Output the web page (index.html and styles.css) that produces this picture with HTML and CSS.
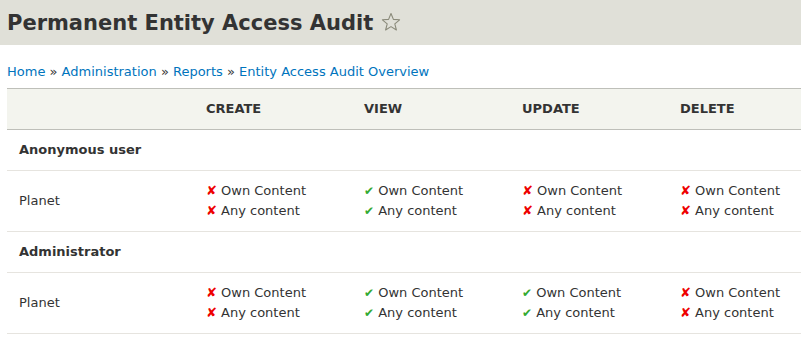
FILE: index.html
```html
<!DOCTYPE html>
<html lang="en">
<head>
    <meta charset="UTF-8">
    <title>Permanent Entity Access Audit</title>
    <link rel="stylesheet" href="styles.css">
</head>
<body>

<header class="page-header">
    <h1>Permanent Entity Access Audit
        <svg class="star" width="20" height="20" viewBox="0 0 20 20">
            <polygon points="10,1.5 12.4,7.4 18.6,7.8 13.8,11.8 15.4,18 10,14.6 4.6,18 6.2,11.8 1.4,7.8 7.6,7.4" fill="none" stroke="#8a8a7a" stroke-width="1.1" stroke-linejoin="round"/>
        </svg>
    </h1>
</header>

<main>
    <nav class="breadcrumb">
        <a href="#">Home</a> » <a href="#">Administration</a> » <a href="#">Reports</a> » <a href="#">Entity Access Audit Overview</a>
    </nav>

    <table class="audit">
        <colgroup>
            <col class="col-first">
            <col class="col-op">
            <col class="col-op">
            <col class="col-op">
            <col class="col-op">
        </colgroup>
        <thead>
            <tr>
                <th></th>
                <th>Create</th>
                <th>View</th>
                <th>Update</th>
                <th>Delete</th>
            </tr>
        </thead>
        <tbody>
            <tr class="role">
                <td colspan="5">Anonymous user</td>
            </tr>
            <tr>
                <td>Planet</td>
                <td><span class="no">✘</span> Own Content<br><span class="no">✘</span> Any content</td>
                <td><span class="yes">✔</span> Own Content<br><span class="yes">✔</span> Any content</td>
                <td><span class="no">✘</span> Own Content<br><span class="no">✘</span> Any content</td>
                <td><span class="no">✘</span> Own Content<br><span class="no">✘</span> Any content</td>
            </tr>
            <tr class="role">
                <td colspan="5">Administrator</td>
            </tr>
            <tr>
                <td>Planet</td>
                <td><span class="no">✘</span> Own Content<br><span class="no">✘</span> Any content</td>
                <td><span class="yes">✔</span> Own Content<br><span class="yes">✔</span> Any content</td>
                <td><span class="yes">✔</span> Own Content<br><span class="yes">✔</span> Any content</td>
                <td><span class="no">✘</span> Own Content<br><span class="no">✘</span> Any content</td>
            </tr>
        </tbody>
    </table>
</main>

</body>
</html>
```

FILE: styles.css
```css
* {
    box-sizing: border-box;
    margin: 0;
    padding: 0;
}

html, body {
    font-family: 'DejaVu Sans', Verdana, sans-serif;
    color: #333;
    background: #fff;
    overflow-x: hidden;
}

.page-header {
    background-color: #e0e0d8;
    height: 45px;
    padding: 0 7px;
}

.page-header h1 {
    font-size: 21px;
    font-weight: bold;
    line-height: 47px;
    color: #333;
    white-space: nowrap;
}

.star {
    vertical-align: -2px;
    margin-left: 0;
}

main {
    padding: 18px 0 0 7px;
}

.breadcrumb {
    font-size: 13px;
    line-height: 18px;
    margin-bottom: 7px;
}

.breadcrumb a {
    color: #0074bd;
    text-decoration: none;
}

.audit {
    table-layout: fixed;
    width: 819px;
    border-collapse: collapse;
    font-size: 13px;
}

.col-first {
    width: 187px;
}

.col-op {
    width: 158px;
}

.audit th {
    background-color: #f3f4ee;
    border-top: 1px solid #bebfb9;
    border-bottom: 1px solid #bebfb9;
    text-align: left;
    text-transform: uppercase;
    font-weight: bold;
    line-height: 20px;
    padding: 10px 12px;
}

.audit td {
    border-bottom: 1px solid #e6e4df;
    line-height: 20px;
    padding: 10px 12px;
    vertical-align: middle;
}

.audit .role td {
    font-weight: bold;
}

.no {
    color: #e00;
}

.yes {
    color: #3a3;
    font-size: 12px;
    line-height: 1;
}
```
